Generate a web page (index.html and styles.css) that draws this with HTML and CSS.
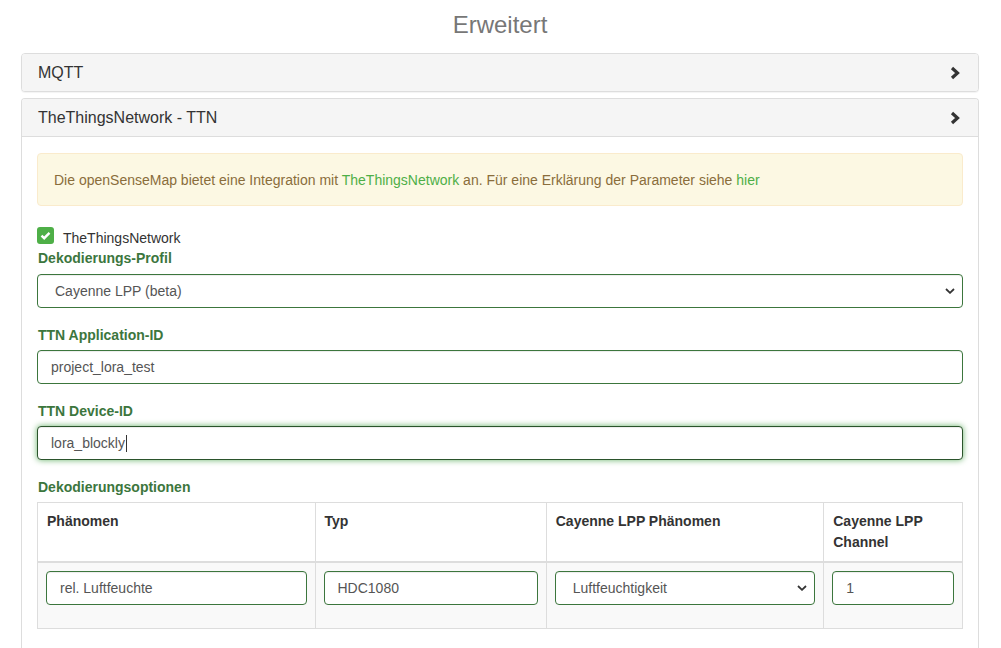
FILE: index.html
```html
<!DOCTYPE html>
<html lang="de">
<head>
<meta charset="utf-8">
<title>Erweitert</title>
<link rel="stylesheet" href="styles.css">
</head>
<body class="page">
<div class="wrap">
  <h3 class="title">Erweitert</h3>

  <div class="panel panel-gap">
    <div class="panel-heading">
      <span>MQTT</span>
      <svg class="chev" width="12" height="14" viewBox="0 0 12 14"><polyline points="3,2 8.5,7 3,12" fill="none" stroke="#333" stroke-width="3.2" stroke-linecap="butt" stroke-linejoin="miter"/></svg>
    </div>
  </div>

  <div class="panel panel-last">
    <div class="panel-heading heading-open">
      <span>TheThingsNetwork - TTN</span>
      <svg class="chev" width="12" height="14" viewBox="0 0 12 14"><polyline points="3,2 8.5,7 3,12" fill="none" stroke="#333" stroke-width="3.2" stroke-linecap="butt" stroke-linejoin="miter"/></svg>
    </div>
    <div class="panel-body">
      <div class="alert">Die openSenseMap bietet eine Integration mit <a class="link" href="#">TheThingsNetwork</a> an. Für eine Erklärung der Parameter siehe <a class="link" href="#">hier</a></div>

      <div class="check-row">
        <span class="checkbox"><svg width="11" height="9" viewBox="0 0 11 9"><polyline points="1.5,4.6 4.2,7.2 9.5,1.8" fill="none" stroke="#fff" stroke-width="2.4"/></svg></span>
        <span class="check-label">TheThingsNetwork</span>
      </div>

      <div class="field field-first">
        <label class="lbl">Dekodierungs-Profil</label>
        <div class="select-wrap">
          <select class="control select"><option>Cayenne LPP (beta)</option></select>
          <svg class="sel-arrow" width="10" height="6" viewBox="0 0 10 6"><polyline points="1,1 5,4.8 9,1" fill="none" stroke="#333" stroke-width="1.8"/></svg>
        </div>
      </div>

      <div class="field">
        <label class="lbl">TTN Application-ID</label>
        <input class="control" type="text" value="project_lora_test">
      </div>

      <div class="field">
        <label class="lbl">TTN Device-ID</label>
        <div class="control focused">lora_blockly<span class="caret"></span></div>
      </div>

      <div class="field">
        <label class="lbl">Dekodierungsoptionen</label>
        <table class="tbl">
          <colgroup><col class="c1"><col class="c2"><col class="c3"><col class="c4"></colgroup>
          <thead>
            <tr><th>Phänomen</th><th>Typ</th><th>Cayenne LPP Phänomen</th><th>Cayenne LPP Channel</th></tr>
          </thead>
          <tbody>
            <tr>
              <td><input class="control cell-control" type="text" value="rel. Luftfeuchte"></td>
              <td><input class="control cell-control" type="text" value="HDC1080"></td>
              <td>
                <div class="select-wrap cell-control">
                  <select class="control select"><option>Luftfeuchtigkeit</option></select>
                  <svg class="sel-arrow" width="10" height="6" viewBox="0 0 10 6"><polyline points="1,1 5,4.8 9,1" fill="none" stroke="#333" stroke-width="1.8"/></svg>
                </div>
              </td>
              <td><input class="control cell-control" type="text" value="1"></td>
            </tr>
          </tbody>
        </table>
      </div>
    </div>
  </div>
</div>
</body>
</html>
```
FILE: styles.css
```css
html, .page {
  overflow: hidden;
}
.page {
  margin: 0;
  font-family: "Liberation Sans", Arial, sans-serif;
  font-size: 14px;
  line-height: 20px;
  color: #333;
  background: #fff;
}
.wrap {
  padding: 0 22px 0 21px;
}
.title {
  margin: 12px 0 15px;
  font-size: 24px;
  line-height: 26px;
  font-weight: normal;
  text-align: center;
  color: #777;
}
.panel {
  border: 1px solid #ddd;
  border-radius: 4px;
  background: #fff;
  box-shadow: 0 1px 1px rgba(0,0,0,.05);
}
.panel-gap {
  margin-bottom: 6px;
}
.panel-last {
  border-bottom: 0;
  border-radius: 4px 4px 0 0;
  box-shadow: none;
}
.panel-heading {
  display: flex;
  justify-content: space-between;
  align-items: center;
  padding: 10px 15px 10px 16px;
  font-size: 16px;
  line-height: 17px;
  background: #f5f5f5;
  border-radius: 3px;
  color: #333;
}
.heading-open {
  border-bottom: 1px solid #ddd;
  border-radius: 3px 3px 0 0;
}
.chev {
  display: block;
  margin-right: 2px;
}
.panel-body {
  padding: 16px 15px 19px;
}
.alert {
  padding: 16px 15px 15px 16px;
  background: #fcf8e3;
  border: 1px solid #faebcc;
  border-radius: 4px;
  color: #8a6d3b;
  margin-bottom: 20px;
}
.link {
  color: #4eaf47;
  text-decoration: none;
}
.check-row {
  display: flex;
  align-items: flex-start;
  height: 22px;
}
.checkbox {
  width: 17px;
  height: 17px;
  border-radius: 3px;
  background: #4eaf47;
  display: flex;
  align-items: center;
  justify-content: center;
  margin-right: 9px;
  margin-top: 1px;
}
.checkbox svg {
  display: block;
}
.check-label {
  color: #333;
  padding-top: 2px;
}
.field {
  margin-top: 17px;
}
.field-first {
  margin-top: 0;
}
.lbl {
  display: block;
  font-weight: bold;
  color: #3c763d;
  margin-bottom: 5px;
  padding-left: 1px;
}
.field-first .lbl {
  margin-bottom: 6px;
}
.control {
  display: block;
  box-sizing: border-box;
  width: 100%;
  height: 34px;
  padding: 6px 12px 6px 13px;
  font-family: "Liberation Sans", Arial, sans-serif;
  font-size: 14px;
  line-height: 20px;
  color: #555;
  background: #fff;
  border: 1px solid #3c763d;
  border-radius: 4px;
  box-shadow: inset 0 1px 1px rgba(0,0,0,.075);
  margin: 0;
}
.select-wrap {
  position: relative;
}
.select {
  -webkit-appearance: none;
  appearance: none;
  padding: 6px 24px 6px 17px;
}
.sel-arrow {
  position: absolute;
  right: 8px;
  top: 14px;
  display: block;
  pointer-events: none;
}
.focused {
  border-color: #2b542c;
  box-shadow: inset 0 1px 1px rgba(0,0,0,.075), 0 0 6px #67b168;
  display: flex;
  align-items: center;
}
.caret {
  display: inline-block;
  width: 1px;
  height: 17px;
  background: #333;
  margin-left: 1px;
}
.tbl {
  width: 100%;
  border-collapse: collapse;
  table-layout: fixed;
  line-height: 21px;
}
.c1 { width: 30%; }
.c2 { width: 25%; }
.c3 { width: 30%; }
.c4 { width: 15%; }
.tbl th {
  text-align: left;
  vertical-align: top;
  padding: 8px 8px 8px 9px;
  border: 1px solid #ddd;
  border-bottom-width: 2px;
  color: #333;
  font-weight: bold;
}
.tbl td {
  padding: 8px;
  border: 1px solid #ddd;
  background: #f9f9f9;
  vertical-align: top;
}
.cell-control {
  margin-bottom: 15px;
}
```
